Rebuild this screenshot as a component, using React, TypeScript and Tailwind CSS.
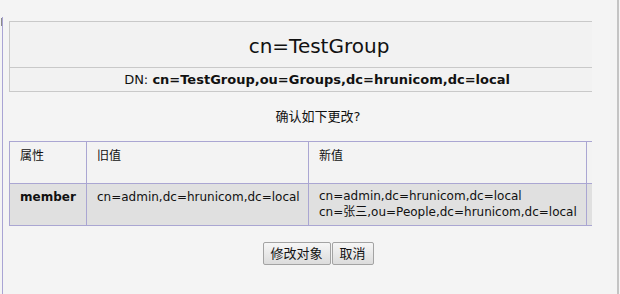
import React from 'react';

const font = { fontFamily: '"DejaVu Sans", "Noto Sans CJK SC", sans-serif' };

export default function App() {
  return (
    <div
      className="w-[620px] h-[294px] bg-[#f4f4f4] overflow-hidden text-[#111] relative"
      style={font}
    >
      <div className="w-[619px] h-full border-r-2 border-[#c4c4c4] pt-[17px]">
        <div className="relative ml-[2px] h-full border-l border-[#a9a4d4] pl-[6px] pt-[4px]">
          <div className="absolute left-[-2px] top-[1px] w-[1px] h-[8px] bg-[#8a8a8a]" />

          {/* header */}
          <div className="w-[583px] border-l border-t border-b border-[#c9c9c9] bg-[#f2f2f2]">
            <div className="h-[45px] flex items-center justify-center text-[20px] pt-[2px] pl-[36px]">
              cn=TestGroup
            </div>
            <div className="h-[24px] border-t border-[#c9c9c9] flex items-center justify-center text-[13px] pl-[32px]">
              <span>DN:&nbsp;</span>
              <span className="font-bold">cn=TestGroup,ou=Groups,dc=hrunicom,dc=local</span>
            </div>
          </div>

          <div className="mt-[16px] text-center text-[13px] pl-[10px] leading-[18px]">确认如下更改?</div>

          {/* changes table */}
          <div className="mt-[15px] w-[583px] border-t border-l border-b border-[#aaa6d2] flex flex-col text-[12px]">
            <div className="flex h-[42px] bg-[#f3f3f3] border-b border-[#aaa6d2]">
              <div className="w-[77px] border-r border-[#aaa6d2] pl-[10px] pt-[5px]">属性</div>
              <div className="w-[222px] border-r border-[#aaa6d2] pl-[10px] pt-[5px]">旧值</div>
              <div className="w-[278px] border-r border-[#aaa6d2] pl-[10px] pt-[5px]">新值</div>
              <div className="flex-1" />
            </div>
            <div className="flex h-[41px] bg-[#e0e0e0]">
              <div className="w-[77px] border-r border-[#aaa6d2] pl-[10px] pt-[4px] font-bold">member</div>
              <div className="w-[222px] border-r border-[#aaa6d2] pl-[10px] pt-[4px]">cn=admin,dc=hrunicom,dc=local</div>
              <div className="w-[278px] border-r border-[#aaa6d2] pl-[10px] pt-[4px] leading-[16px]">
                <div>cn=admin,dc=hrunicom,dc=local</div>
                <div>cn=张三,ou=People,dc=hrunicom,dc=local</div>
              </div>
              <div className="flex-1" />
            </div>
          </div>

          <div className="mt-[16px] flex justify-center gap-[1px] pl-[10px] text-[13px]">
            <button className="h-[23px] w-[68px] border border-[#a3a3a3] rounded-[2px] bg-gradient-to-b from-[#f6f6f6] to-[#dcdcdc]">
              修改对象
            </button>
            <button className="h-[23px] w-[42px] border border-[#a3a3a3] rounded-[2px] bg-gradient-to-b from-[#f6f6f6] to-[#dcdcdc]">
              取消
            </button>
          </div>
        </div>
      </div>
    </div>
  );
}
